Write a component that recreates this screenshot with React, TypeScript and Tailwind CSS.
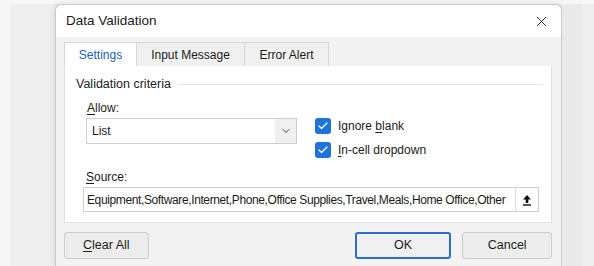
import { X, ChevronDown, Check } from 'lucide-react'

const font = { fontFamily: '"Liberation Sans", Arial, sans-serif' }

function CheckRow({ label, u }: { label: string; u: number }) {
  return (
    <div className="flex h-[16px] items-center gap-[7px]">
      <div className="flex h-[16px] w-[16px] items-center justify-center rounded-[3px] bg-[#1f72d8]">
        <Check size={12} strokeWidth={2.5} color="#ffffff" />
      </div>
      <span className="text-[12px] text-[#1b1b1b]">
        {label.slice(0, u)}
        <span className="underline underline-offset-2">{label[u]}</span>
        {label.slice(u + 1)}
      </span>
    </div>
  )
}

export default function App() {
  return (
    <div className="flex h-[266px] w-[594px] overflow-hidden bg-[#eeeeee]" style={font}>
      <div className="w-[10px] shrink-0 bg-[#f6f6f6]" />
      <div className="flex flex-1 flex-col">
        <div className="h-[4px] shrink-0 bg-[#f7f7f7]" />
        <div className="flex flex-1">
          <div className="w-[45px] shrink-0" />
          {/* dialog */}
          <div className="flex w-[507px] shrink-0 flex-col rounded-tl-[6px] rounded-tr-[6px] border border-b-0 border-[#c9c9c9] bg-[#f3f3f3] shadow-[0_0_6px_rgba(0,0,0,0.12)]">
            <div className="flex h-[32px] items-center justify-between rounded-t-[6px] bg-white pl-[10px] pr-[11px]">
              <span className="text-[13.5px] text-[#1b1b1b]">Data Validation</span>
              <X size={17} strokeWidth={1.3} color="#222" />
            </div>
            <div className="flex flex-col pl-[8px] pr-[9px] pt-[5px]">
              {/* tabs */}
              <div className="flex h-[24px] text-[12px]">
                <div className="flex w-[73px] items-center justify-center border border-b-0 border-[#d7d7d7] bg-white text-[#1f5fb4]">
                  Settings
                </div>
                <div className="flex w-[108px] items-center justify-center border-r border-t border-[#d7d7d7] bg-[#f0f0f0] text-[#1b1b1b]">
                  Input Message
                </div>
                <div className="flex w-[84px] items-center justify-center border-r border-t border-[#d7d7d7] bg-[#f0f0f0] text-[#1b1b1b]">
                  Error Alert
                </div>
              </div>
              {/* panel */}
              <div className="flex h-[157px] flex-col border border-t-0 border-[#e2e2e2] bg-white px-[11px] text-[12px] text-[#1b1b1b]">
                <div className="flex h-[26px] items-center gap-[7px] pt-[10px]">
                  <span className="text-[12.5px] leading-none">Validation criteria</span>
                  <div className="mr-[-3px] h-px flex-1 bg-[#e4e4e4]" />
                </div>
                <div className="mt-[6px] flex h-[60px] items-start">
                  <div className="ml-[10px] flex w-[211px] flex-col">
                    <span className="ml-[1px] h-[20px] leading-[20px]">
                      <span className="underline underline-offset-2">A</span>llow:
                    </span>
                    <div className="flex h-[26px] items-center border border-[#cfcfcf] bg-white">
                      <span className="flex-1 pl-[5px]">List</span>
                      <div className="flex h-full w-[21px] items-center justify-center bg-[#f0f0f0]">
                        <ChevronDown size={12} strokeWidth={1.8} color="#333" />
                      </div>
                    </div>
                  </div>
                  <div className="ml-[18px] mt-[20px] flex flex-col gap-[8px]">
                    <CheckRow label="Ignore blank" u={7} />
                    <CheckRow label="In-cell dropdown" u={0} />
                  </div>
                </div>
                <span className="ml-[10px] mt-[10px] h-[18px] leading-[18px]">
                  <span className="underline underline-offset-2">S</span>ource:
                </span>
                <div className="ml-[7px] mr-[1px] mt-[1px] flex h-[25px] items-center overflow-hidden border border-[#cfcfcf] bg-white">
                  <span className="min-w-0 flex-1 overflow-hidden whitespace-nowrap pl-[3px] tracking-[-0.38px]">
                    Equipment,Software,Internet,Phone,Office Supplies,Travel,Meals,Home Office,Other
                  </span>
                  <div className="flex h-full w-[23px] shrink-0 items-center justify-center border-l border-[#dcdcdc]">
                    <svg width="10" height="12" viewBox="0 0 10 12">
                      <path d="M5 1 L9 5.5 L6.3 5.5 L6.3 9 L3.7 9 L3.7 5.5 L1 5.5 Z" fill="#111" />
                      <rect x="1" y="10.3" width="8" height="1.4" fill="#111" />
                    </svg>
                  </div>
                </div>
              </div>
              {/* buttons */}
              <div className="mt-[9px] flex h-[27px] text-[12.5px] text-[#1b1b1b]">
                <div className="flex w-[85px] items-center justify-center rounded-[3px] border border-[#cccccc] bg-[#ececec]">
                  <span>
                    <span className="underline underline-offset-2">C</span>lear All
                  </span>
                </div>
                <div className="ml-[206px] flex w-[97px] items-center justify-center rounded-[3px] border-2 border-[#2c6fcb] bg-[#f0f0f0]">
                  OK
                </div>
                <div className="ml-[11px] flex w-[90px] items-center justify-center rounded-[3px] border border-[#cccccc] bg-[#ececec]">
                  Cancel
                </div>
              </div>
            </div>
          </div>
          <div className="w-[19px] shrink-0 bg-[#e9e9e9]" />
        </div>
      </div>
    </div>
  )
}
